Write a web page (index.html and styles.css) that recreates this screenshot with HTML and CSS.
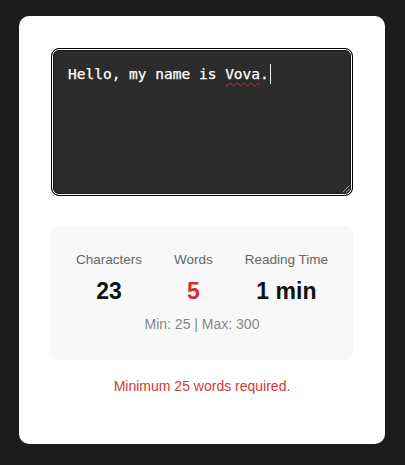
FILE: index.html
```html
<!DOCTYPE html>
<html lang="en">
<head>
<meta charset="utf-8">
<title>Word Counter</title>
<link rel="stylesheet" href="styles.css">
</head>
<body>
<main class="card">
  <div class="editor" role="textbox" aria-multiline="true">
    <span class="line">Hello, my name is <span class="misspelled">Vova</span>.<span class="caret"></span></span>
    <svg class="grip" width="9" height="9" viewBox="0 0 9 9" aria-hidden="true">
      <path d="M8.5 1.5 L1.5 8.5 M8.5 5 L5 8.5" stroke="#a0a0a0" stroke-width="1" fill="none"/>
    </svg>
  </div>
  <section class="stats">
    <div class="stat-row">
      <div class="stat">
        <div class="label">Characters</div>
        <div class="value">23</div>
      </div>
      <div class="stat">
        <div class="label">Words</div>
        <div class="value value-error">5</div>
      </div>
      <div class="stat">
        <div class="label">Reading Time</div>
        <div class="value">1 min</div>
      </div>
    </div>
    <div class="limits">Min: 25 | Max: 300</div>
  </section>
  <p class="error">Minimum 25 words required.</p>
</main>
</body>
</html>
```
FILE: styles.css
```css
html, body {
  margin: 0;
  padding: 0;
}
body {
  background: #1c1c1c;
  font-family: "Liberation Sans", Arial, sans-serif;
  padding: 16px 0 0 19px;
}
.card {
  box-sizing: border-box;
  width: 366px;
  background: #fff;
  border-radius: 10px;
  padding: 32px 32px 50px;
  display: flex;
  flex-direction: column;
}
.editor {
  position: relative;
  box-sizing: border-box;
  height: 148px;
  border: 1px solid #000;
  border-radius: 8px;
  background: #2c2c2c;
  box-shadow: inset 0 0 0 1px #fff, inset 0 0 0 2px #111;
  padding: 15px 16px;
  font-family: "DejaVu Sans Mono", monospace;
  font-size: 14.5px;
  line-height: 20px;
  color: #fff;
  -webkit-text-stroke: 0.25px #fff;
}
.misspelled {
  text-decoration: underline wavy #d03030;
  text-decoration-thickness: 1px;
  text-underline-offset: 3px;
}
.caret {
  display: inline-block;
  width: 1px;
  height: 20px;
  background: #f2f2f2;
  vertical-align: -5px;
  margin-left: 1px;
}
.grip {
  position: absolute;
  right: 2px;
  bottom: 2px;
}
.stats {
  margin-top: 30px;
  background: #f8f8f8;
  border-radius: 8px;
  padding: 26px 20px 28px;
  display: flex;
  flex-direction: column;
  align-items: center;
}
.stat-row {
  display: flex;
  justify-content: center;
  gap: 32px;
}
.stat {
  display: flex;
  flex-direction: column;
  align-items: center;
}
.label {
  font-size: 13.5px;
  line-height: 16px;
  color: #666;
  margin-bottom: 9px;
}
.value {
  font-size: 23px;
  line-height: 28px;
  font-weight: bold;
  color: #111;
}
.value-error {
  color: #d03232;
}
.limits {
  margin-top: 11px;
  font-size: 14px;
  line-height: 16px;
  color: #888;
}
.error {
  margin: 18px 0 0;
  font-size: 14px;
  line-height: 16px;
  color: #d03a3a;
  text-align: center;
}
```
